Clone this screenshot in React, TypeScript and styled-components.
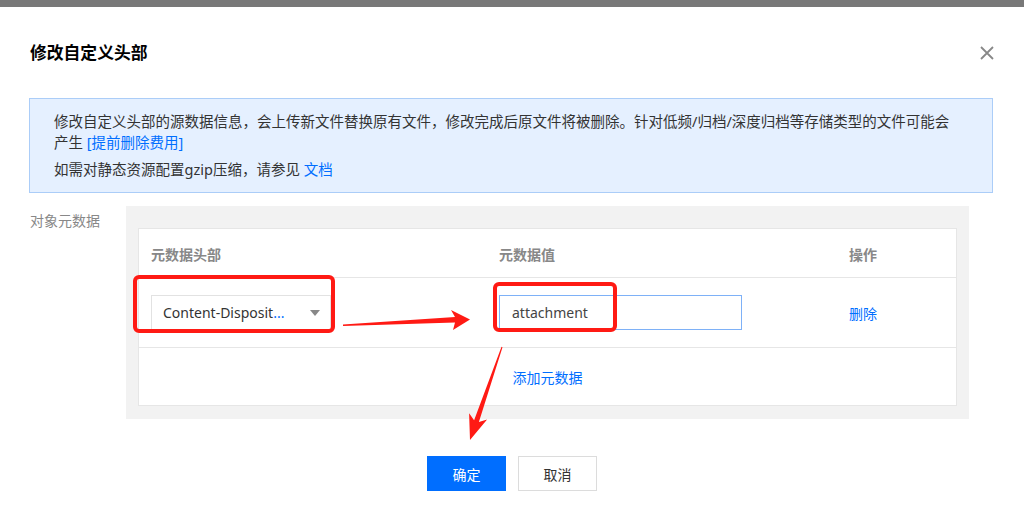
import { createGlobalStyle, styled } from 'styled-components'

const GlobalStyle = createGlobalStyle`
  body {
    margin: 0;
    background: #fff;
    font-family: "Noto Sans", "Noto Sans CJK SC", sans-serif;
    color: #333;
  }
`

const Page = styled.div`
  position: relative;
  width: 1024px;
  height: 522px;
  overflow: hidden;
  background: #fff;
`

const TopBar = styled.div`
  height: 7px;
  background: #787878;
`

const Header = styled.div`
  display: flex;
  align-items: center;
  justify-content: space-between;
  height: 91px;
  padding: 0 29px 0 30px;
`

const Title = styled.h3`
  margin: 0;
  font-size: 16.8px;
  font-weight: 700;
  color: #000;
  line-height: 24px;
`

const CloseButton = styled.button`
  display: flex;
  padding: 0;
  border: 0;
  background: none;
  cursor: pointer;
`

const InfoBox = styled.div`
  margin: 0 31px 0 29px;
  padding: 12px 40px 12px 24px;
  background: #e5f0ff;
  border: 1px solid #abcdf8;
`

const InfoText = styled.p<{ $gap?: number }>`
  margin: ${(p) => p.$gap ?? 0}px 0 0;
  font-size: 14.5px;
  line-height: 21px;
  color: #333;
`

const Link = styled.a`
  color: #006eff;
  text-decoration: none;
`

const FormRow = styled.div`
  display: flex;
  margin-top: 13px;
`

const FieldLabel = styled.div`
  flex: none;
  width: 96px;
  padding: 5px 0 0 30px;
  font-size: 14px;
  line-height: 20px;
  color: #888;
`

const Panel = styled.div`
  flex: none;
  width: 819px;
  padding: 22px 12px 13px;
  background: #f2f2f2;
`

const Table = styled.div`
  background: #fff;
  border: 1px solid #e6e6e6;
`

const Row = styled.div<{ $height: number; $line?: boolean }>`
  display: grid;
  grid-template-columns: 348px 350px 1fr;
  align-items: center;
  height: ${(p) => p.$height}px;
  border-bottom: ${(p) => (p.$line ? '1px solid #e6e6e6' : '0')};
`

const HeadCell = styled.div`
  align-self: start;
  padding: 16px 0 0 12px;
  font-size: 14px;
  line-height: 20px;
  font-weight: 700;
  color: #888;
`

const Cell = styled.div`
  display: flex;
  align-items: center;
  padding-left: 12px;
`

const Select = styled.div`
  display: flex;
  align-items: center;
  justify-content: space-between;
  box-sizing: border-box;
  width: 180px;
  height: 36px;
  padding: 0 10px 0 11px;
  border: 1px solid #e2e2e2;
  font-size: 14px;
  color: #333;
`

const Dots = styled.span`
  color: #006eff;
`

const Caret = styled.span`
  width: 0;
  height: 0;
  border-left: 5px solid transparent;
  border-right: 5px solid transparent;
  border-top: 6px solid #888;
`

const TextInput = styled.input`
  box-sizing: border-box;
  width: 243px;
  height: 35px;
  padding: 0 12px;
  border: 1px solid #7eb1f7;
  outline: none;
  font-family: inherit;
  font-size: 14px;
  color: #444;
`

const TextLink = styled.a`
  font-size: 14px;
  color: #006eff;
  text-decoration: none;
`

const AddRow = styled.div`
  display: flex;
  align-items: center;
  justify-content: center;
  height: 57px;
`

const Footer = styled.div`
  display: flex;
  justify-content: center;
  gap: 12px;
  margin-top: 37px;
`

const Button = styled.button<{ $primary?: boolean }>`
  width: 79px;
  height: 35px;
  border: 1px solid ${(p) => (p.$primary ? '#006eff' : '#dcdcdc')};
  background: ${(p) => (p.$primary ? '#006eff' : '#fff')};
  color: ${(p) => (p.$primary ? '#fff' : '#333')};
  font-family: inherit;
  font-size: 14px;
  cursor: pointer;
`

const Annotations = styled.svg`
  position: absolute;
  left: 0;
  top: 0;
  pointer-events: none;
`

export default function App() {
  return (
    <Page>
      <GlobalStyle />
      <TopBar />
      <Header>
        <Title>修改自定义头部</Title>
        <CloseButton aria-label="关闭">
          <svg width="16" height="16" viewBox="0 0 16 16">
            <path d="M2 2 L14 14 M14 2 L2 14" stroke="#888" strokeWidth="1.8" />
          </svg>
        </CloseButton>
      </Header>
      <InfoBox>
        <InfoText>
          修改自定义头部的源数据信息，会上传新文件替换原有文件，修改完成后原文件将被删除。针对低频/归档/深度归档等存储类型的文件可能会产生{' '}
          <Link href="#">[提前删除费用]</Link>
        </InfoText>
        <InfoText $gap={6}>
          如需对静态资源配置gzip压缩，请参见 <Link href="#">文档</Link>
        </InfoText>
      </InfoBox>
      <FormRow>
        <FieldLabel>对象元数据</FieldLabel>
        <Panel>
          <Table>
            <Row $height={48} $line>
              <HeadCell>元数据头部</HeadCell>
              <HeadCell>元数据值</HeadCell>
              <HeadCell>操作</HeadCell>
            </Row>
            <Row $height={69} $line>
              <Cell>
                <Select>
                  <span>
                    Content-Disposit<Dots>...</Dots>
                  </span>
                  <Caret />
                </Select>
              </Cell>
              <Cell>
                <TextInput defaultValue="attachment" />
              </Cell>
              <Cell>
                <TextLink href="#">删除</TextLink>
              </Cell>
            </Row>
            <AddRow>
              <TextLink href="#">添加元数据</TextLink>
            </AddRow>
          </Table>
        </Panel>
      </FormRow>
      <Footer>
        <Button $primary>确定</Button>
        <Button>取消</Button>
      </Footer>
      <Annotations width="1024" height="522" viewBox="0 0 1024 522">
        <rect x="135" y="277" width="198" height="54" rx="4" fill="none" stroke="#ff1a14" strokeWidth="4" />
        <rect x="495" y="284" width="120" height="46" rx="4" fill="none" stroke="#ff1a14" strokeWidth="4" />
        <polygon
          points="343,324.5 455,317 451,310 470,319.5 453,330 455,322.5 343,326"
          fill="#ff1a14"
        />
        <polygon
          points="502.5,347.2 478.9,421.9 487.1,419.5 470,440 469.1,413.3 474.1,420.3 501.5,346.8"
          fill="#ff1a14"
        />
      </Annotations>
    </Page>
  )
}
